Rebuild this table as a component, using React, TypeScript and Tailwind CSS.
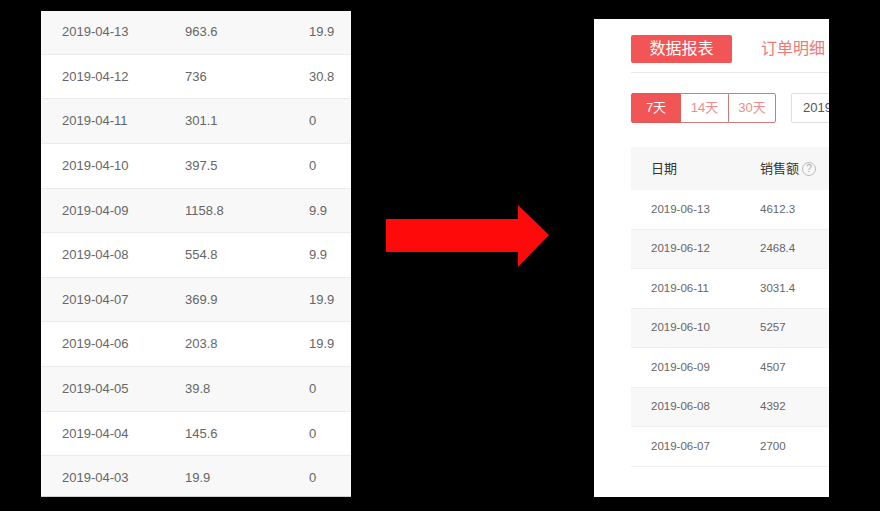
import React from 'react';

const oldRows = [
  ['2019-04-13', '963.6', '19.9'],
  ['2019-04-12', '736', '30.8'],
  ['2019-04-11', '301.1', '0'],
  ['2019-04-10', '397.5', '0'],
  ['2019-04-09', '1158.8', '9.9'],
  ['2019-04-08', '554.8', '9.9'],
  ['2019-04-07', '369.9', '19.9'],
  ['2019-04-06', '203.8', '19.9'],
  ['2019-04-05', '39.8', '0'],
  ['2019-04-04', '145.6', '0'],
  ['2019-04-03', '19.9', '0'],
];

const newRows = [
  ['2019-06-13', '4612.3'],
  ['2019-06-12', '2468.4'],
  ['2019-06-11', '3031.4'],
  ['2019-06-10', '5257'],
  ['2019-06-09', '4507'],
  ['2019-06-08', '4392'],
  ['2019-06-07', '2700'],
];

const font = { fontFamily: '"Liberation Sans", "Noto Sans CJK SC", sans-serif' };

function App() {
  return (
    <div className="w-[880px] h-[511px] bg-black flex items-start overflow-hidden" style={font}>
      {/* old table, cropped screenshot */}
      <div className="ml-[41px] mt-[11px] w-[310px] h-[486px] bg-white overflow-hidden border-b border-[#cfcfcf]">
        <div className="-mt-[0.8px]">
          {oldRows.map((r, i) => (
            <div
              key={i}
              className={`h-[44.6px] flex items-center text-[13px] text-[#666] border-b border-[#ebebeb] ${
                i % 2 === 0 ? 'bg-[#f8f8f8]' : 'bg-white'
              }`}
            >
              <span className="w-[144px] pl-[21px]">{r[0]}</span>
              <span className="w-[124px]">{r[1]}</span>
              <span>{r[2]}</span>
            </div>
          ))}
        </div>
      </div>

      {/* arrow */}
      <svg className="ml-[35px] mt-[205px]" width="163" height="62" viewBox="0 0 163 62">
        <polygon points="0,14 132,14 132,0 163,30 132,62 132,47 0,47" fill="#ff0a0a" />
      </svg>

      {/* new page */}
      <div className="ml-[45px] mt-[19px] w-[235px] h-[478px] bg-white overflow-hidden">
        <div className="w-[420px] pl-[37px] pt-[16px]">
          <div className="flex items-center h-[28px]">
            <div className="w-[101px] h-[28px] rounded-[2px] bg-[#f25555] text-white text-[16px] flex items-center justify-center">
              数据报表
            </div>
            <span className="ml-[29px] text-[16px] text-[#f07878]">订单明细</span>
          </div>
          <div className="mt-[9px] border-b border-[#e8e8e8]" />

          <div className="mt-[20px] flex items-center">
            <div className="w-[50px] h-[30px] bg-[#f25555] border border-[#e35a5a] text-white text-[13px] flex items-center justify-center rounded-l-[2px]">
              7天
            </div>
            <div className="w-[47px] h-[30px] border-y border-[#d27a7a] text-[#ec8c8c] text-[13px] flex items-center justify-center">
              14天
            </div>
            <div className="w-[48px] h-[30px] border border-[#d27a7a] text-[#ec8c8c] text-[13px] flex items-center justify-center rounded-r-[2px]">
              30天
            </div>
            <div className="ml-[15px] w-[160px] h-[30px] border border-[#dedede] rounded-[2px] text-[13px] text-[#555] flex items-center pl-[11px]">
              2019-06-07
            </div>
          </div>

          <div className="mt-[24px]">
            <div className="h-[43px] bg-[#f7f7f7] flex items-center text-[13px] text-[#333]">
              <span className="w-[129px] pl-[20px]">日期</span>
              <span className="flex items-center">
                销售额
                <span className="ml-[3px] w-[14px] h-[14px] rounded-full border border-[#bbb] text-[#aaa] text-[10px] leading-none flex items-center justify-center">
                  ?
                </span>
              </span>
            </div>
            {newRows.map((r, i) => (
              <div
                key={i}
                className={`h-[39.5px] flex items-center text-[11.5px] text-[#666] border-b border-[#efefef] ${
                  i % 2 === 1 ? 'bg-[#f8f8f8]' : 'bg-white'
                }`}
              >
                <span className="w-[129px] pl-[20px]">{r[0]}</span>
                <span>{r[1]}</span>
              </div>
            ))}
          </div>
        </div>
      </div>
    </div>
  );
}

export default App;
